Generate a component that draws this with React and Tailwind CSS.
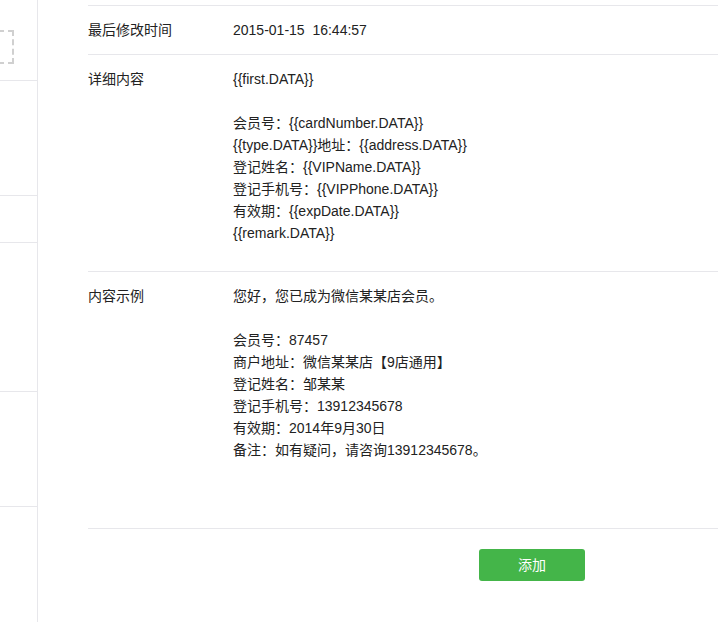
import React from 'react';

const detailLines = [
  '{{first.DATA}}',
  '',
  '会员号：{{cardNumber.DATA}}',
  '{{type.DATA}}地址：{{address.DATA}}',
  '登记姓名：{{VIPName.DATA}}',
  '登记手机号：{{VIPPhone.DATA}}',
  '有效期：{{expDate.DATA}}',
  '{{remark.DATA}}',
];

const exampleLines = [
  '您好，您已成为微信某某店会员。',
  '',
  '会员号：87457',
  '商户地址：微信某某店【9店通用】',
  '登记姓名：邹某某',
  '登记手机号：13912345678',
  '有效期：2014年9月30日',
  '备注：如有疑问，请咨询13912345678。',
];

function Lines({ lines }) {
  return (
    <div>
      {lines.map((line, i) => (
        <div key={i} className="h-[22px] leading-[22px] whitespace-pre">
          {line || '\u00a0'}
        </div>
      ))}
    </div>
  );
}

function Row({ label, children, className = '' }) {
  return (
    <div className={`flex border-t border-[#e7e7eb] ${className}`}>
      <div className="w-[145px] shrink-0 h-[22px] leading-[22px]">{label}</div>
      <div className="flex-1">{children}</div>
    </div>
  );
}

export default function App() {
  return (
    <div
      className="flex h-[622px] w-[718px] overflow-hidden bg-white text-[14px] text-[#222]"
      style={{ fontFamily: '"Liberation Sans", "Noto Sans CJK SC", sans-serif' }}
    >
      {/* sidebar */}
      <div className="w-[38px] shrink-0 border-r border-[#e7e7eb] overflow-hidden">
        <div className="h-[81px] border-b border-[#e7e7eb] pt-[30px]">
          <div className="ml-[-22px] w-[36px] h-[34px] border-2 border-dashed border-[#d0d0d0]" />
        </div>
        <div className="h-[115px] border-b border-[#e7e7eb]" />
        <div className="h-[47px] border-b border-[#e7e7eb]" />
        <div className="h-[149px] border-b border-[#e7e7eb]" />
        <div className="h-[115px] border-b border-[#e7e7eb]" />
      </div>

      {/* main */}
      <div className="flex-1 pl-[50px] pt-[5px]">
        <Row label="最后修改时间" className="py-[13px]">
          <div className="h-[22px] leading-[22px] whitespace-pre">2015-01-15  16:44:57</div>
        </Row>
        <Row label="详细内容" className="pt-[13px] pb-[27px]">
          <Lines lines={detailLines} />
        </Row>
        <Row label="内容示例" className="pt-[13px] pb-[67px]">
          <Lines lines={exampleLines} />
        </Row>
        <div className="border-t border-[#e7e7eb] pt-[20px]">
          <button className="ml-[391px] w-[106px] h-[32px] rounded-[3px] bg-[#44b549] text-white text-[14px]">
            添加
          </button>
        </div>
      </div>
    </div>
  );
}
